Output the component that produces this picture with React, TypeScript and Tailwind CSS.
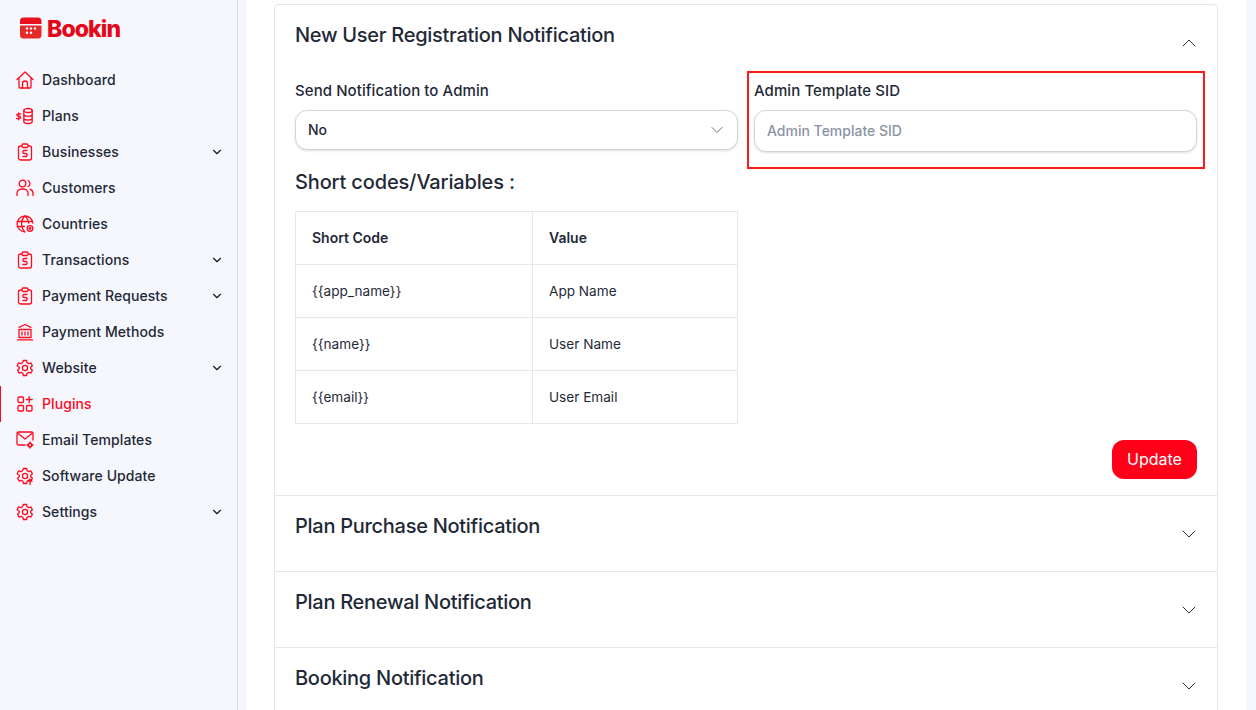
import type { ReactNode } from 'react';
import { ChevronDown, ChevronUp } from 'lucide-react';

const font = { fontFamily: 'Inter, "Liberation Sans", sans-serif' };

function Icon({ children }: { children: ReactNode }) {
  return (
    <svg width="18" height="18" viewBox="0 0 18 18" fill="none" stroke="#ff0a1f" strokeWidth="1.3" strokeLinecap="round" strokeLinejoin="round" className="shrink-0">
      {children}
    </svg>
  );
}

const Clipboard = () => (
  <Icon>
    <rect x="2.5" y="3" width="13" height="14" rx="2" />
    <rect x="6" y="1" width="6" height="3.5" rx="1.2" fill="#f5f7fc" />
    <path d="M11 7.5H8a1 1 0 0 0-1 1v1a1 1 0 0 0 1 1h2a1 1 0 0 1 1 1v1a1 1 0 0 1-1 1H7" />
  </Icon>
);

const Gear = ({ extra }: { extra?: ReactNode }) => (
  <Icon>
    <path d="M7.4 1.5h3.2l.5 2.2 1.5.9 2.2-.7 1.6 2.8-1.7 1.5v1.6l1.7 1.5-1.6 2.8-2.2-.7-1.5.9-.5 2.2H7.4l-.5-2.2-1.5-.9-2.2.7-1.6-2.8 1.7-1.5V8.2L1.1 6.7l1.6-2.8 2.2.7 1.5-.9z" />
    <circle cx="9" cy="9" r="2.6" />
    {extra}
  </Icon>
);

const items: { label: string; icon: ReactNode; caret?: boolean; active?: boolean }[] = [
  {
    label: 'Dashboard',
    icon: (
      <Icon>
        <path d="M1 8.5 9 1l8 7.5M3 7v9a1 1 0 0 0 1 1h10a1 1 0 0 0 1-1V7" />
        <path d="M6.5 17v-4.5a2.5 2.5 0 0 1 5 0V17" />
      </Icon>
    ),
  },
  {
    label: 'Plans',
    icon: (
      <Icon>
        <ellipse cx="12" cy="3.5" rx="4.2" ry="2" />
        <path d="M7.800 3.500v11c0 1.100 1.900 2 4.200 2s4.200-.9 4.200-2v-11M7.800 7.200c0 1.100 1.900 2 4.200 2s4.200-.9 4.200-2M7.800 11c0 1.100 1.900 2 4.200 2s4.200-.9 4.200-2" />
        <path d="M4.800 6.800H2a1.100 1.100 0 0 0 0 2.400h1.400a1.100 1.100 0 0 1 0 2.400H.4M2.700 5.800v7" strokeWidth="1.200" />
      </Icon>
    ),
  },
  { label: 'Businesses', icon: <Clipboard />, caret: true },
  {
    label: 'Customers',
    icon: (
      <Icon>
        <circle cx="6.500" cy="4.500" r="3.300" />
        <path d="M1 16.500v-2A4.500 4.500 0 0 1 5.500 10h2a4.500 4.500 0 0 1 4.500 4.500v2M12 1.500a3.300 3.300 0 0 1 0 6M14 10.200a4.500 4.500 0 0 1 3 4.300v2" />
      </Icon>
    ),
  },
  {
    label: 'Countries',
    icon: (
      <Icon>
        <path d="M9 16.800A7.900 7.900 0 1 1 16.800 8" />
        <path d="M1.400 6.500h15M1.400 11.500h7M8.500 1.200c-4 4.500-4 11 0 15.500M9.500 1.200c2 2.200 3 4.600 3.200 7" />
        <circle cx="14" cy="13.500" r="2.800" fill="#f5f7fc" />
        <circle cx="14" cy="13.500" r=".8" />
      </Icon>
    ),
  },
  { label: 'Transactions', icon: <Clipboard />, caret: true },
  { label: 'Payment Requests', icon: <Clipboard />, caret: true },
  {
    label: 'Payment Methods',
    icon: (
      <Icon>
        <path d="M1.500 16.800h15M3 14.500h12M3 6.500h12v8H3zM6 9v3M9 9v3M12 9v3M3 4.300 9 1.500l6 2.800" />
      </Icon>
    ),
  },
  { label: 'Website', icon: <Gear />, caret: true },
  {
    label: 'Plugins',
    active: true,
    icon: (
      <Icon>
        <rect x="2" y="2" width="5.500" height="5.500" rx="1" />
        <rect x="2" y="10.500" width="5.500" height="5.500" rx="1" />
        <rect x="10.500" y="10.500" width="5.500" height="5.500" rx="1" />
        <path d="M13.200 1.500v6M10.200 4.500h6" />
      </Icon>
    ),
  },
  {
    label: 'Email Templates',
    icon: (
      <Icon>
        <path d="M9 14H2.500A1.500 1.500 0 0 1 1 12.500v-10A1.500 1.500 0 0 1 2.500 1h13A1.500 1.500 0 0 1 17 2.500V9" />
        <path d="m1.500 2 7.500 6 7.500-6" />
        <circle cx="14" cy="14" r="1.800" strokeWidth="1.600" />
        <path d="M14 11v.8M14 16.200v.8M11 14h.8M16.200 14h.8" />
      </Icon>
    ),
  },
  {
    label: 'Software Update',
    icon: <Gear extra={<path d="M14 17.500v-5M12 14.300l2-2 2 2" stroke="#ff0a1f" />} />,
  },
  { label: 'Settings', icon: <Gear />, caret: true },
];

const rows = [
  ['{{app_name}}', 'App Name'],
  ['{{name}}', 'User Name'],
  ['{{email}}', 'User Email'],
];

function Sidebar() {
  return (
    <aside className="w-[238px] shrink-0 border-r border-[#d9dce6] bg-[#f5f7fc]">
      <div className="flex h-[62px] items-start gap-[5px] pl-5 pt-[17px]">
        <svg width="22" height="22" viewBox="0 0 22 22" className="shrink-0">
          <path d="M0 7V4a3.500 3.500 0 0 1 3.500-3.500h14.500A3.500 3.500 0 0 1 21.500 4v3z" fill="#e8111f" />
          <path d="M0 8.500h21.500V18a3.500 3.500 0 0 1-3.500 3.500H3.500A3.500 3.500 0 0 1 0 18z" fill="#e62a2a" />
          <g fill="#fff">
            <circle cx="7" cy="11.500" r="1.200" />
            <circle cx="11" cy="11.500" r="1.200" />
            <circle cx="15" cy="11.500" r="1.200" />
            <circle cx="7" cy="15.800" r="1.200" />
            <circle cx="11" cy="15.800" r="1.200" />
          </g>
        </svg>
        <span className="text-[23px] leading-[24px] font-extrabold tracking-[-0.9px] text-[#e5061a]">Bookin</span>
      </div>
      <nav>
        {items.map((it) => (
          <div
            key={it.label}
            className={
              it.active
                ? 'relative flex h-9 items-center pl-4 pr-[13px] text-[#ff0a1f]'
                : 'relative flex h-9 items-center pl-4 pr-[13px] text-[#1f2937]'
            }
          >
            {it.active && <span className="absolute inset-y-0 left-0 w-px bg-[#ff0a1f]" />}
            {it.icon}
            <span className="ml-2 flex-1 text-sm leading-5 font-medium tracking-[0.08px]">{it.label}</span>
            {it.caret && <ChevronDown size={14} strokeWidth={2} className="text-[#111827]" />}
          </div>
        ))}
      </nav>
    </aside>
  );
}

function Collapsed({ title }: { title: string }) {
  return (
    <div className="flex h-[76px] shrink-0 items-start justify-between border-t border-[#e5e7eb] pt-4 pr-4 pl-5">
      <h3 className="text-xl leading-7 font-medium tracking-[-0.28px] text-[#1f2937]">{title}</h3>
      <ChevronDown size={24} strokeWidth={0.95} className="mt-[10px] text-[#1f2937]" />
    </div>
  );
}

export default function App() {
  return (
    <div className="flex h-[710px] overflow-hidden bg-[#f5f7fc]" style={font}>
      <Sidebar />
      <main className="mr-[10px] ml-2 flex-1 overflow-hidden bg-white px-7 pt-1">
        <div className="rounded-t border border-[#e5e7eb]">
          <div className="px-5 pb-4">
            <div className="-mr-1 flex h-[74px] items-start justify-between pt-4">
              <h3 className="text-xl leading-7 font-medium tracking-[-0.28px] text-[#1f2937]">New User Registration Notification</h3>
              <ChevronUp size={24} strokeWidth={0.95} className="mt-[10px] text-[#1f2937]" />
            </div>
            <div className="grid grid-cols-2 gap-4">
              <div>
                <label className="mb-[7px] block text-[15px] leading-6 font-medium tracking-[0.08px] text-[#1f2937]">Send Notification to Admin</label>
                <div className="flex h-10 items-center justify-between rounded-xl border border-[#d1d5db] bg-white pr-[10px] pl-3 text-sm font-medium text-[#1f2937] shadow-sm">
                  No
                  <ChevronDown size={20} strokeWidth={1.2} className="text-[#6b7280]" />
                </div>
              </div>
              <div className="relative">
                <span className="pointer-events-none absolute -top-2 -right-2 -bottom-[17px] -left-[7px] border-2 border-[#ff1a1a]" />
                <label className="mb-[7px] block text-[15px] leading-6 font-medium tracking-[0.08px] text-[#1f2937]">Admin Template SID</label>
                <input
                  placeholder="Admin Template SID"
                  className="h-[42px] w-full rounded-xl border border-[#d1d5db] bg-white px-3 pb-[2px] text-sm font-medium shadow-sm outline-none placeholder:text-[#8a93a3]"
                />
              </div>
            </div>
            <h4 className="mt-4 text-xl leading-7 font-medium tracking-[-0.15px] text-[#1f2937]">Short codes/Variables :</h4>
            <div className="mt-[15px] grid grid-cols-2 gap-4">
              <table className="w-full border-collapse text-[13.6px] text-[#1f2937]">
                <tbody>
                  <tr className="h-[53px]">
                    <th className="w-[237px] border border-[#e5e7eb] px-4 text-left text-sm font-semibold">Short Code</th>
                    <th className="border border-[#e5e7eb] px-4 text-left text-sm font-semibold">Value</th>
                  </tr>
                  {rows.map(([code, value]) => (
                    <tr key={code} className="h-[53px]">
                      <td className="border border-[#e5e7eb] px-4">{code}</td>
                      <td className="border border-[#e5e7eb] px-4">{value}</td>
                    </tr>
                  ))}
                </tbody>
              </table>
            </div>
            <div className="mt-4 flex justify-end">
              <button className="h-[39px] w-[85px] rounded-xl bg-[#ff0019] pb-[2px] text-base text-white">Update</button>
            </div>
          </div>
          <Collapsed title="Plan Purchase Notification" />
          <Collapsed title="Plan Renewal Notification" />
          <Collapsed title="Booking Notification" />
        </div>
      </main>
    </div>
  );
}
